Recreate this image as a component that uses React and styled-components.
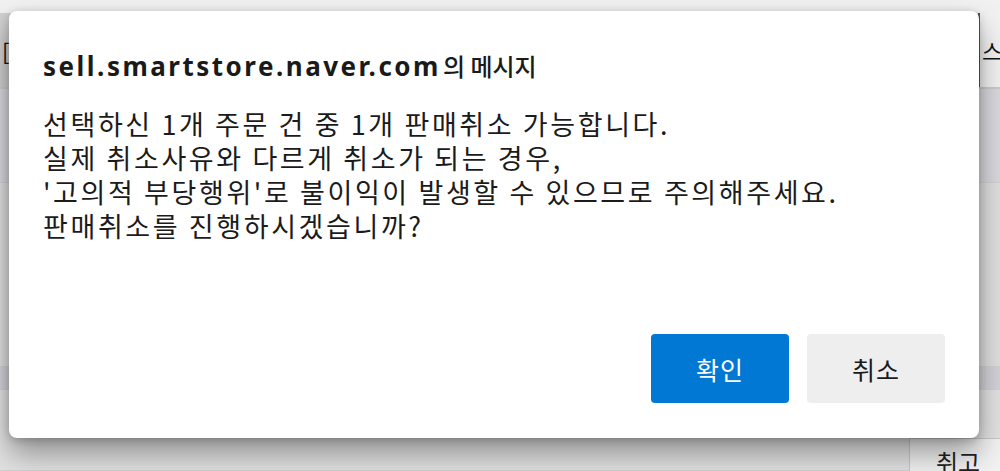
import React from 'react';
import styled, { createGlobalStyle } from 'styled-components';

const Global = createGlobalStyle`
    html, body {
        margin: 0;
        padding: 0;
    }
    body {
        width: 1000px;
        height: 471px;
        overflow: hidden;
        background: #e2e2e2;
        font-family: "Noto Sans", "Noto Sans CJK KR", sans-serif;
    }
`;

const Screen = styled.div`
    position: relative;
    width: 1000px;
    height: 471px;
    overflow: hidden;
`;

// dimmed page behind the alert
const Page = styled.div`
    display: flex;
    flex-direction: column;
    height: 100%;
    background: #e1e1e1;
`;
const TopBar = styled.div`
    height: 13px;
    background: #f1f1f1;
`;
const HeadRow = styled.div`
    display: flex;
    height: 74px;
    border-bottom: 2px solid #cbcbcb;
`;
const HeadCell = styled.div`
    flex: ${p => p.grow || 'none'};
    width: ${p => p.w || 'auto'};
    background: ${p => p.bg};
    display: flex;
    align-items: center;
    padding-left: ${p => p.pl || 0}px;
    font-family: "Noto Sans CJK KR", sans-serif;
    font-size: 22px;
    color: #111;
    border-left: ${p => p.line ? '2px solid #555' : 'none'};
    overflow: hidden;
`;
const BodyRow = styled.div`
    height: ${p => p.h}px;
    background: ${p => p.bg};
    border-bottom: 1px solid #d2d2d6;
`;
const FootBox = styled.div`
    position: absolute;
    right: 0;
    bottom: 0;
    width: 64px;
    height: 24px;
    background: #f2f2f2;
    border: 1px solid #c8c8c8;
    border-right: none;
    border-bottom: none;
    font-family: "Noto Sans CJK KR", sans-serif;
    font-size: 24px;
    color: #222;
    padding-left: 26px;
    padding-top: 8px;
    line-height: 30px;
    overflow: hidden;
`;

const Dialog = styled.div`
    position: absolute;
    left: 9px;
    top: 11px;
    width: 970px;
    height: 427px;
    box-sizing: border-box;
    background: #fff;
    border-radius: 8px;
    box-shadow: 0 16px 30px rgba(0,0,0,0.36), 0 2px 8px rgba(0,0,0,0.2);
    padding: 37px 34px 35px 34px;
    display: flex;
    flex-direction: column;
`;
const Title = styled.h1`
    margin: 0;
    font-family: "Noto Sans", "Noto Sans CJK KR", sans-serif;
    font-weight: 700;
    font-size: 26px;
    line-height: 36px;
    color: #1a1a1a;
    white-space: nowrap;
`;
const Host = styled.span`
    letter-spacing: 2.5px;
`;
const Suffix = styled.span`
    font-family: "Noto Sans CJK KR", sans-serif;
    font-weight: 500;
    font-size: 24px;
    margin-left: 2px;
`;
const Message = styled.div`
    margin-top: 23px;
    flex: 1;
    font-family: "Noto Sans CJK KR", sans-serif;
    font-size: 27px;
    line-height: 34px;
    color: #1b1b1b;
    letter-spacing: 2.6px;
`;
const Line = styled.div`
    white-space: nowrap;
`;
const Buttons = styled.div`
    display: flex;
    justify-content: flex-end;
    gap: 18px;
`;
const Btn = styled.button`
    width: 138px;
    height: 69px;
    border: none;
    border-radius: 4px;
    font-family: "Noto Sans CJK KR", sans-serif;
    font-size: 25px;
    letter-spacing: 1px;
    background: ${p => p.primary ? '#0078d4' : '#eeeeee'};
    color: ${p => p.primary ? '#fff' : '#1a1a1a'};
    cursor: pointer;
`;

export default function App() {
    return (
        <Screen>
            <Global />
            <Page>
                <TopBar />
                <HeadRow>
                    <HeadCell w="600px" bg="#d0d0d0" pl={2}>[</HeadCell>
                    <HeadCell grow="1" bg="#d6d6d6" />
                    <HeadCell w="18px" bg="#f2f2f2" line pl={2}>스</HeadCell>
                </HeadRow>
                <BodyRow h={94} bg="#d9d9de" />
                <BodyRow h={184} bg="#dfdfdf" />
                <BodyRow h={22} bg="#d2d2d8" />
                <BodyRow h={80} bg="#e2e2e2" />
            </Page>
            <FootBox>취고</FootBox>
            <Dialog>
                <Title>
                    <Host>sell.smartstore.naver.com</Host>
                    <Suffix>의 메시지</Suffix>
                </Title>
                <Message>
                    <Line>선택하신 1개 주문 건 중 1개 판매취소 가능합니다.</Line>
                    <Line>실제 취소사유와 다르게 취소가 되는 경우,</Line>
                    <Line>'고의적 부당행위'로 불이익이 발생할 수 있으므로 주의해주세요.</Line>
                    <Line>판매취소를 진행하시겠습니까?</Line>
                </Message>
                <Buttons>
                    <Btn primary>확인</Btn>
                    <Btn>취소</Btn>
                </Buttons>
            </Dialog>
        </Screen>
    );
}
